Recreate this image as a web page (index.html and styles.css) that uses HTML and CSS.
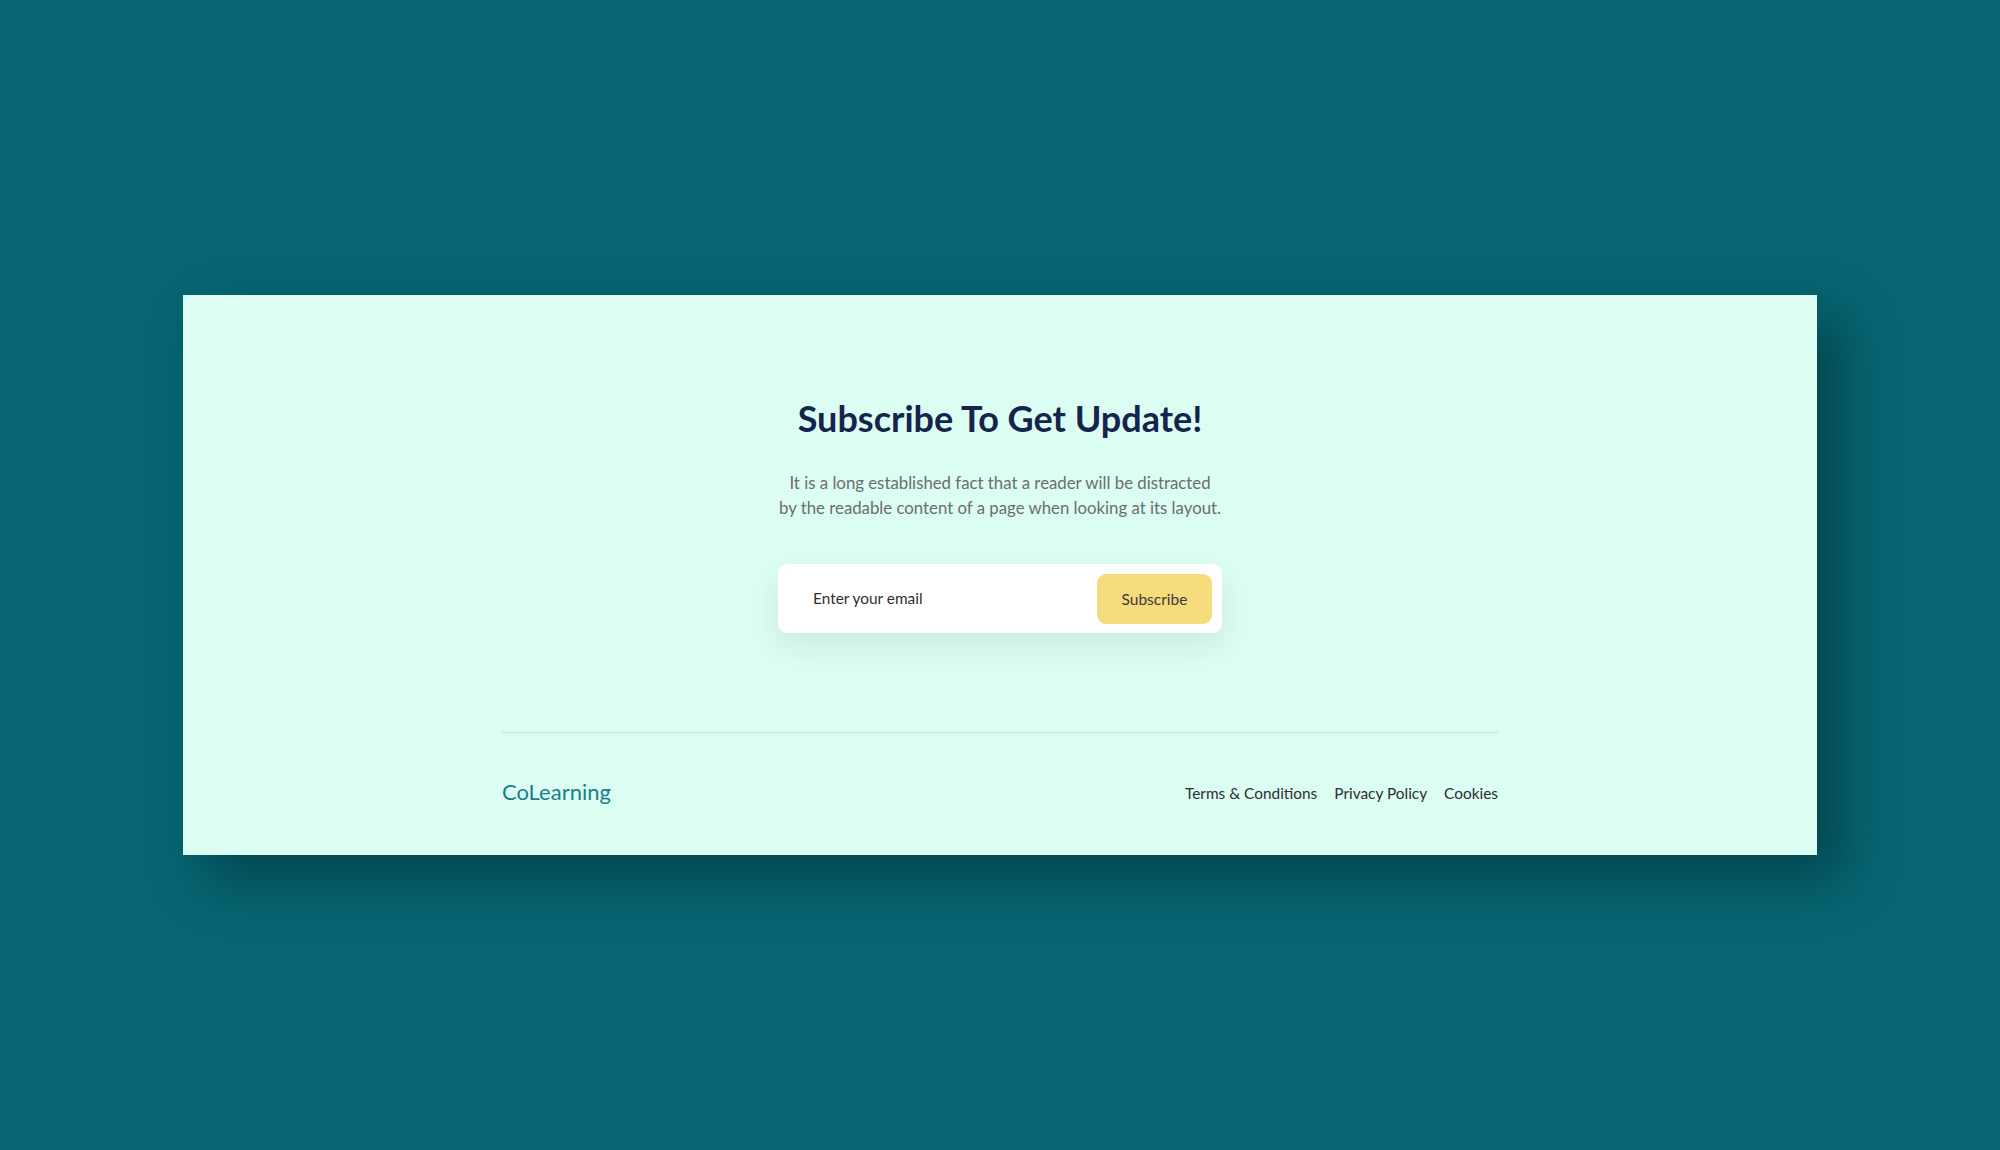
FILE: index.html
```html
<!DOCTYPE html>
<html lang="en">
<head>
<meta charset="utf-8">
<title>Subscribe</title>
<link rel="stylesheet" href="styles.css">
</head>
<body>
<main class="card">
  <section class="subscribe">
    <h1 class="title">Subscribe To Get Update!</h1>
    <p class="lead">It is a long established fact that a reader will be distracted<br>by the readable content of a page when looking at its layout.</p>
    <form class="form" onsubmit="return false">
      <input class="email" type="email" placeholder="Enter your email">
      <button class="btn" type="submit">Subscribe</button>
    </form>
  </section>
  <footer class="footer">
    <div class="brand">CoLearning</div>
    <nav class="links">
      <a href="#">Terms &amp; Conditions</a>
      <a href="#">Privacy Policy</a>
      <a href="#">Cookies</a>
    </nav>
  </footer>
</main>
</body>
</html>
```
FILE: styles.css
```css
* { box-sizing: border-box; }
html, body { margin: 0; padding: 0; }
body {
  min-height: 100vh;
  background: #066571;
  font-family: Lato, "Open Sans", sans-serif;
  display: flex;
  align-items: center;
  justify-content: center;
}
.card {
  width: 1634px;
  background: #dcfdf1;
  padding: 102px 0 50px;
  box-shadow: 24px 24px 50px rgba(0, 30, 40, 0.45);
}
.subscribe {
  display: flex;
  flex-direction: column;
  align-items: center;
}
.title {
  margin: 0 0 29px;
  font-size: 36px;
  line-height: 1.2;
  font-weight: 700;
  color: #15244c;
}
.lead {
  margin: 0 0 44px;
  font-size: 16.8px;
  line-height: 25px;
  color: #6b6e70;
  text-align: center;
}
.form {
  width: 444px;
  height: 69px;
  background: #ffffff;
  border-radius: 9px;
  display: flex;
  align-items: center;
  padding: 10px 10px 9px 35px;
  box-shadow: 0 12px 28px rgba(0, 90, 70, 0.09);
}
.email {
  flex: 1;
  border: 0;
  outline: none;
  background: transparent;
  font-family: inherit;
  font-size: 15.4px;
  color: #2b2b2b;
  padding: 0;
  margin-top: -2px;
}
.email::placeholder { color: #2f2f2f; opacity: 1; }
.btn {
  width: 115px;
  height: 50px;
  border: 0;
  border-radius: 9px;
  background: #f6dc7c;
  font-family: inherit;
  font-size: 15.5px;
  color: #3a3a3a;
  cursor: pointer;
}
.footer {
  width: 996px;
  margin: 99px auto 0;
  border-top: 1px solid #b9e5da;
  padding-top: 46px;
  display: flex;
  align-items: center;
  justify-content: space-between;
}
.brand {
  font-size: 22px;
  line-height: 26px;
  color: #1b7e8b;
}
.links {
  display: flex;
  gap: 17px;
  padding-top: 2px;
}
.links a {
  font-size: 15.4px;
  color: #2c2f33;
  text-decoration: none;
}
```
